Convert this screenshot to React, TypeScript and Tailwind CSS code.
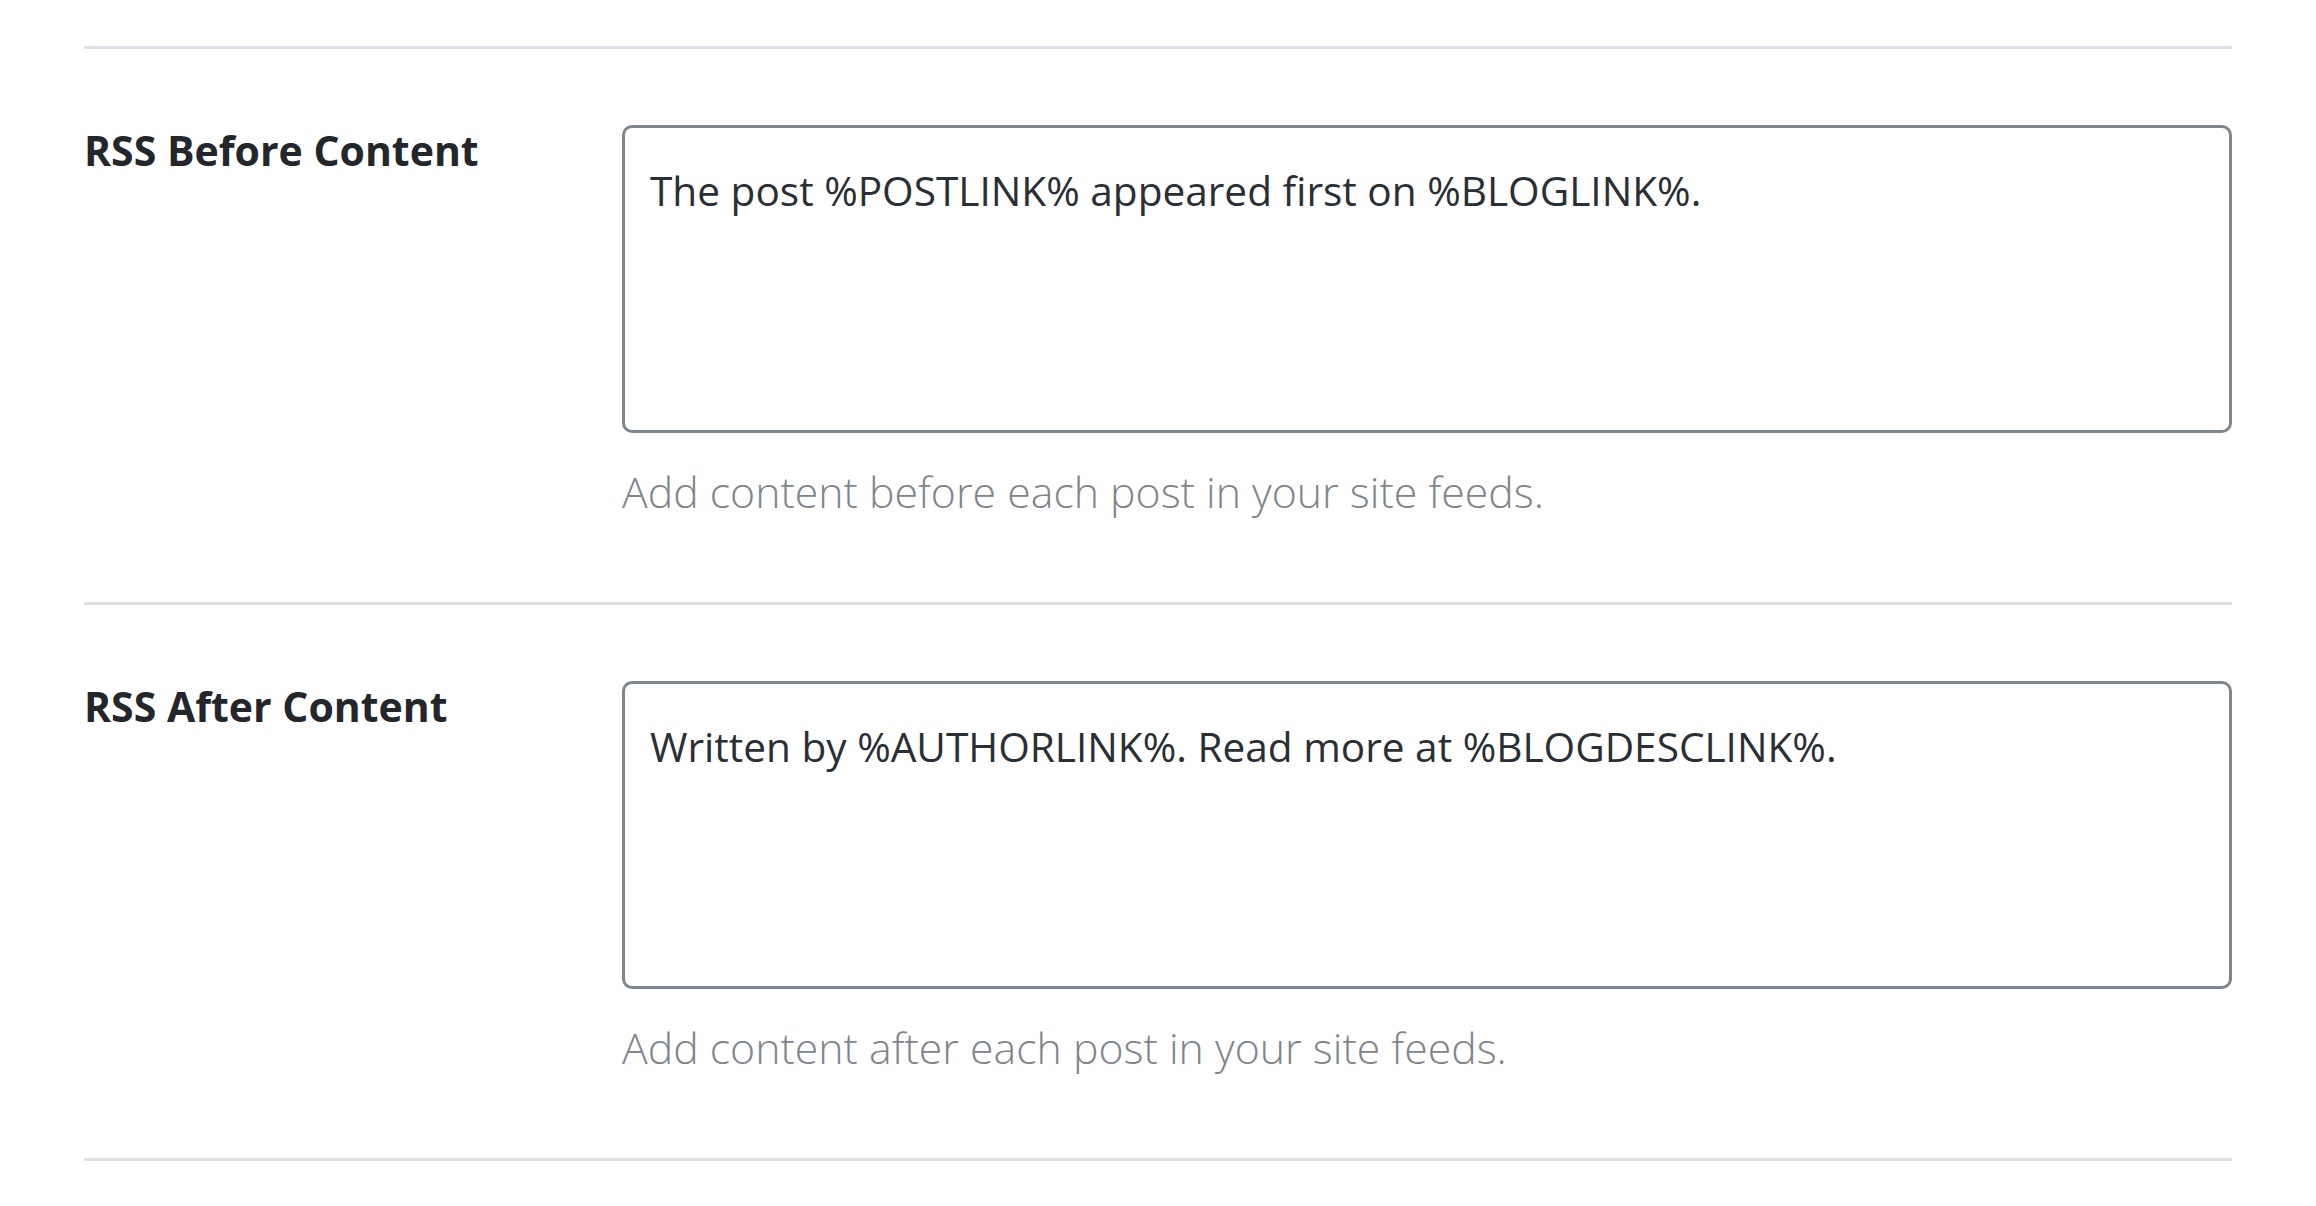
import React from "react";

const rows = [
  {
    label: "RSS Before Content",
    value: "The post %POSTLINK% appeared first on %BLOGLINK%.",
    help: "Add content before each post in your site feeds.",
  },
  {
    label: "RSS After Content",
    value: "Written by %AUTHORLINK%. Read more at %BLOGDESCLINK%.",
    help: "Add content after each post in your site feeds.",
  },
];

export default function App() {
  return (
    <div
      className="min-h-screen bg-white px-[84px] pt-[46px]"
      style={{ fontFamily: '"Open Sans", "Noto Sans", sans-serif' }}
    >
      {rows.map((r) => (
        <div
          key={r.label}
          className="grid grid-cols-[538px_1fr] border-t-[3px] border-[#dcdfe3] pt-[76px] pb-[78px]"
        >
          <div className="pt-[1px] text-[41px] font-bold leading-[1.2] text-[#23262b]">
            {r.label}
          </div>
          <div className="flex flex-col">
            <textarea
              defaultValue={r.value}
              className="h-[308px] w-full resize-none rounded-[10px] border-[3px] border-[#80868e] bg-white px-[25px] pt-[33px] text-[40.6px] leading-[1.5] text-[#2a2f35] outline-none"
              style={{ fontFamily: '"Open Sans", "Noto Sans", sans-serif' }}
            />
            <p className="mt-[27px] text-[42.8px] font-light leading-[1.5] text-[#80858c]">
              {r.help}
            </p>
          </div>
        </div>
      ))}
      <div className="border-t-[3px] border-[#dcdfe3]" />
    </div>
  );
}
